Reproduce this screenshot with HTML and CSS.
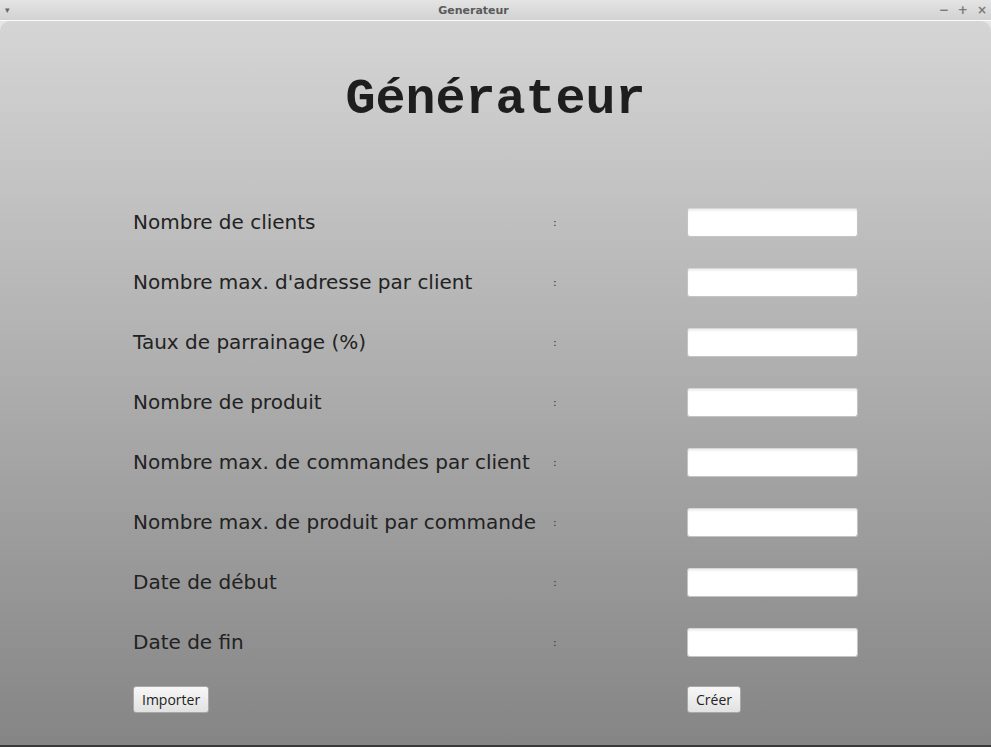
FILE: index.html
```html
<!DOCTYPE html>
<html lang="fr">
<head>
  <meta charset="UTF-8">
  <title>Generateur</title>
  <link rel="stylesheet" href="styles.css">
</head>
<body>
  <div class="titlebar">
    <span class="menu-arrow">&#9662;</span>
    <span class="win-title">Generateur</span>
    <span class="win-buttons"><span>&minus;</span><span>+</span><span>&times;</span></span>
  </div>

  <div class="window">
    <h1>Générateur</h1>

    <div class="form">
      <label>Nombre de clients</label><span class="colon">:</span><input type="text">
      <label>Nombre max. d'adresse par client</label><span class="colon">:</span><input type="text">
      <label>Taux de parrainage (%)</label><span class="colon">:</span><input type="text">
      <label>Nombre de produit</label><span class="colon">:</span><input type="text">
      <label>Nombre max. de commandes par client</label><span class="colon">:</span><input type="text">
      <label>Nombre max. de produit par commande</label><span class="colon">:</span><input type="text">
      <label>Date de début</label><span class="colon">:</span><input type="text">
      <label>Date de fin</label><span class="colon">:</span><input type="text">
    </div>

    <div class="actions">
      <div><button class="btn">Importer</button></div>
      <div></div>
      <div><button class="btn">Créer</button></div>
    </div>
  </div>
</body>
</html>
```

FILE: styles.css
```css
html, body {
  margin: 0;
  height: 100%;
}

body {
  font-family: 'DejaVu Sans', sans-serif;
  background: #e6e6e6;
  overflow: hidden;
}

.titlebar {
  height: 20px;
  display: flex;
  align-items: center;
  justify-content: space-between;
  padding: 0 4px 0 5px;
  background: linear-gradient(to bottom, #e4e4e4, #d2d2d2);
  border-bottom: 1px solid #fafafa;
  color: #666;
  font-size: 11px;
}

.menu-arrow {
  font-size: 9px;
  width: 45px;
}

.win-title {
  font-weight: bold;
  font-size: 11px;
  color: #5a5a5a;
}

.win-buttons {
  width: 90px;
  display: flex;
  justify-content: flex-end;
  gap: 9px;
  font-weight: bold;
  font-size: 12px;
  color: #7a7a7a;
}

.window {
  height: 724px;
  border-radius: 10px 10px 0 0;
  background: linear-gradient(to bottom, #d5d5d5, #858585);
  border-bottom: 2px solid #3a3a3a;
}

h1 {
  margin: 0;
  padding-top: 51px;
  text-align: center;
  font-family: 'Liberation Mono', 'Courier New', monospace;
  font-weight: bold;
  font-size: 50px;
  line-height: 56px;
  color: #1e1e1e;
}

.form,
.actions {
  display: grid;
  grid-template-columns: 420px 134px 171px;
  padding-left: 133px;
}

.form {
  grid-auto-rows: 60px;
  align-items: center;
  margin-top: 64px;
}

.form label {
  font-size: 20px;
  color: #222;
}

.colon {
  font-size: 11px;
  color: #333;
}

.form input {
  height: 29px;
  box-sizing: border-box;
  border: 1px solid #c4c4c4;
  border-top-color: #d6d6d6;
  border-radius: 3px;
  background: #fff;
  box-shadow: inset 0 2px 2px rgba(0,0,0,0.06);
}

.actions {
  margin-top: 14px;
}

.btn {
  height: 27px;
  padding: 0 8px;
  font-family: 'Open Sans', 'Noto Sans', sans-serif;
  font-size: 14px;
  color: #222;
  background: linear-gradient(to bottom, #f7f7f7, #e2e2e2);
  border: 1px solid #a8a8a8;
  border-radius: 3px;
}
```
